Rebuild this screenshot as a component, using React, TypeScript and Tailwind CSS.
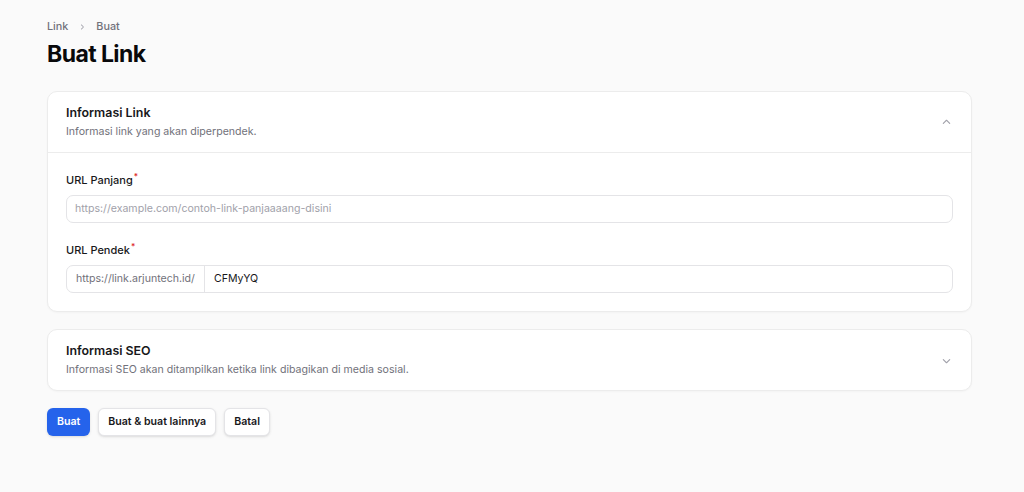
import React from 'react';

const Chevron: React.FC<{ up?: boolean }> = ({ up }) => (
  <svg
    width="15"
    height="15"
    viewBox="0 0 20 20"
    fill="currentColor"
    className={up ? 'rotate-180' : ''}
  >
    <path
      fillRule="evenodd"
      d="M5.22 8.22a.75.75 0 0 1 1.06 0L10 11.94l3.72-3.72a.75.75 0 1 1 1.06 1.06l-4.25 4.25a.75.75 0 0 1-1.06 0L5.22 9.28a.75.75 0 0 1 0-1.06Z"
      clipRule="evenodd"
    />
  </svg>
);

interface SectionProps {
  title: string;
  description: string;
  open?: boolean;
  children?: React.ReactNode;
}

const Section: React.FC<SectionProps> = ({ title, description, open, children }) => (
  <section className="rounded-[10px] bg-white border border-[#ececec] shadow-[0_1px_2px_rgba(0,0,0,0.03)]">
    <header className="flex items-center h-[60px] px-[18px]">
      <div className="flex-1">
        <h3 className="text-[12.4px] leading-[18px] font-semibold text-[#18181b]">{title}</h3>
        <p className="mt-[2px] text-[10.6px] leading-[16px] text-[#71717a]">{description}</p>
      </div>
      <span className="text-[#a1a1aa] mr-[-1px]">
        <Chevron up={open} />
      </span>
    </header>
    {children && <div className="border-t border-[#ececec] px-[18px] pt-[19px] pb-[18px]">{children}</div>}
  </section>
);

const Label: React.FC<{ children: React.ReactNode }> = ({ children }) => (
  <label className="block text-[11px] leading-[16px] font-medium text-[#18181b] mb-[7px]">
    {children}
    <sup className="text-[#dc2626] font-medium ml-[1px]">*</sup>
  </label>
);

export default function App() {
  return (
    <div className="min-h-screen w-full bg-[#fafafa] pl-[47px] pr-[52px] pt-[19px] pb-10 font-['Inter','Liberation_Sans',sans-serif]">
      <nav className="flex items-center gap-[9px] text-[10.8px] leading-[16px] text-[#71717a] font-medium">
        <span>Link</span>
        <svg width="10" height="10" viewBox="0 0 20 20" fill="#a1a1aa">
          <path
            fillRule="evenodd"
            d="M8.22 5.22a.75.75 0 0 1 1.06 0l4.25 4.25a.75.75 0 0 1 0 1.06l-4.25 4.25a.75.75 0 0 1-1.06-1.06L11.94 10 8.22 6.28a.75.75 0 0 1 0-1.06Z"
            clipRule="evenodd"
          />
        </svg>
        <span>Buat</span>
      </nav>
      <h1 className="mt-[4px] text-[23px] leading-[30px] font-bold tracking-tight text-[#09090b]">Buat Link</h1>

      <div className="mt-[22px] flex flex-col gap-[17px]">
        <Section title="Informasi Link" description="Informasi link yang akan diperpendek." open>
          <Label>URL Panjang</Label>
          <div className="h-[28px] rounded-[7px] border border-[#e4e4e7] bg-white flex items-center px-[8px] text-[10.6px] text-[#a1a1aa]">
            https://example.com/contoh-link-panjaaaang-disini
          </div>
          <div className="mt-[19px]">
            <Label>URL Pendek</Label>
            <div className="h-[28px] rounded-[7px] border border-[#e4e4e7] bg-white flex items-stretch text-[10.6px]">
              <div className="flex items-center px-[9px] text-[#71717a] border-r border-[#e4e4e7]">
                https://link.arjuntech.id/
              </div>
              <div className="flex items-center px-[9px] text-[#18181b]">CFMyYQ</div>
            </div>
          </div>
        </Section>
        <Section
          title="Informasi SEO"
          description="Informasi SEO akan ditampilkan ketika link dibagikan di media sosial."
        />
      </div>

      <div className="mt-[17px] flex gap-[8px]">
        <button className="h-[28px] px-[10px] rounded-[6px] bg-[#2563eb] text-white text-[10.6px] font-semibold shadow-sm">
          Buat
        </button>
        <button className="h-[28px] px-[9px] rounded-[6px] bg-white border border-[#e4e4e7] text-[#18181b] text-[10.6px] font-semibold shadow-sm">
          Buat &amp; buat lainnya
        </button>
        <button className="h-[28px] px-[9px] rounded-[6px] bg-white border border-[#e4e4e7] text-[#18181b] text-[10.6px] font-semibold shadow-sm">
          Batal
        </button>
      </div>
    </div>
  );
}
